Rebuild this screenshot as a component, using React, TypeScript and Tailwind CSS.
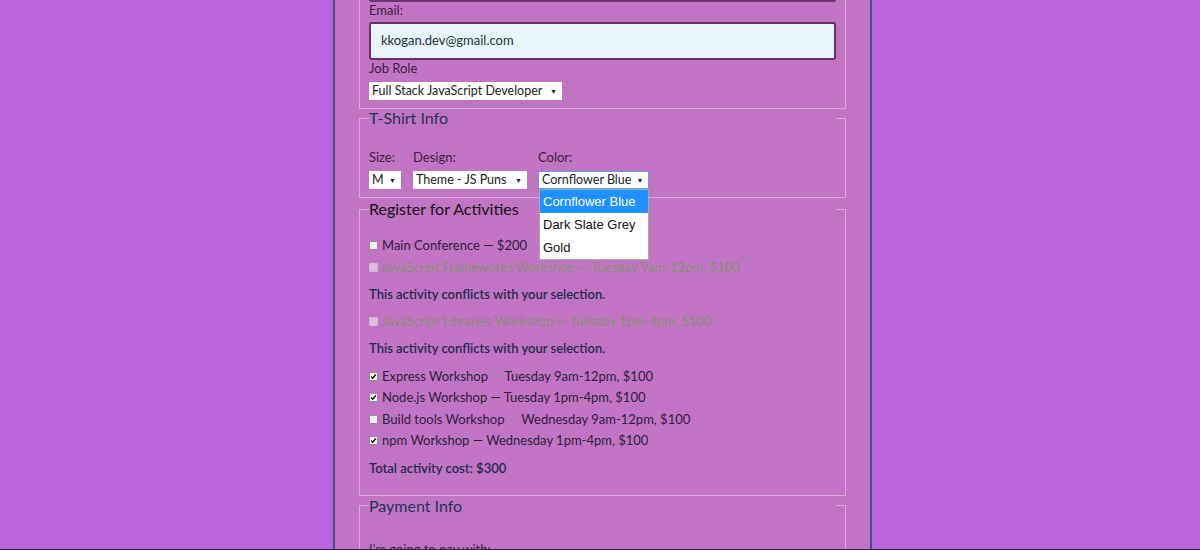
import React from "react";

type Activity = {
  name: string;
  detail: string;
  lightDash: boolean;
  checked: boolean;
  disabled: boolean;
  conflict?: boolean;
};

const activities: Activity[] = [
  { name: "Main Conference", detail: "$200", lightDash: false, checked: false, disabled: false },
  { name: "JavaScript Frameworks Workshop", detail: "Tuesday 9am-12pm, $100", lightDash: false, checked: false, disabled: true, conflict: true },
  { name: "JavaScript Libraries Workshop", detail: "Tuesday 1pm-4pm, $100", lightDash: false, checked: false, disabled: true, conflict: true },
  { name: "Express Workshop", detail: "Tuesday 9am-12pm, $100", lightDash: true, checked: true, disabled: false },
  { name: "Node.js Workshop", detail: "Tuesday 1pm-4pm, $100", lightDash: false, checked: true, disabled: false },
  { name: "Build tools Workshop", detail: "Wednesday 9am-12pm, $100", lightDash: true, checked: false, disabled: false },
  { name: "npm Workshop", detail: "Wednesday 1pm-4pm, $100", lightDash: false, checked: true, disabled: false },
];

function FakeSelect({ label, focused, className }: { label: string; focused?: boolean; className?: string }) {
  return (
    <div
      className={`flex h-[18px] items-center justify-between whitespace-nowrap bg-white pl-[3px] pr-[5px] text-[12.5px] text-[#222] ${
        focused ? "border border-[#5a9be6]" : ""
      } ${className ?? ""}`}
    >
      <span>{label}</span>
      <span className="ml-[5px] text-[7px]">▼</span>
    </div>
  );
}

function CheckBox({ checked, disabled }: { checked: boolean; disabled: boolean }) {
  return (
    <span
      className={`flex h-[9px] w-[9px] shrink-0 items-center justify-center rounded-[1px] border ${
        disabled ? "border-[#d6b6d6] bg-[#dbbcdb]" : "border-[#8e8e8e] bg-[#eeeeee]"
      }`}
    >
      {checked && (
        <svg viewBox="0 0 8 8" className="h-[7px] w-[7px]">
          <path d="M1.3 4.1 L3.1 5.9 L6.7 1.7" stroke="#1c1c1c" strokeWidth="1.6" fill="none" />
        </svg>
      )}
    </span>
  );
}

function Legend({ children, color }: { children: React.ReactNode; color: string }) {
  return (
    <legend className={`h-[22px] w-[467px] pb-[3px] text-[16px] leading-[22px] ${color}`}>{children}</legend>
  );
}

export default function App() {
  return (
    <div className="flex h-[550px] w-full flex-col overflow-hidden bg-[#b966dc] font-['Lato',sans-serif]">
      <div className="h-[549px] overflow-hidden">
        <div className="ml-[333px] h-full w-[539px] border-x-2 border-[#474f86] bg-[#c274c4] px-[24px]">
          {/* Basic info (scrolled) */}
          <fieldset className="border border-t-0 border-[#dba7db] px-[9px] pb-[8px]">
            <div className="h-[2px] rounded-b-[2px] bg-[#6c3a72]" />
            <div className="h-[16px] text-[13px] leading-[16px] text-[#3d1f3f]">Email:</div>
            <div className="mt-[4px] flex h-[38px] items-center rounded-[3px] border-2 border-[#6d2c70] bg-[#e8f5fb] pl-[10px] text-[13px] text-[#263040]">
              kkogan.dev@gmail.com
            </div>
            <div className="h-[16px] text-[13px] leading-[16px] text-[#3d1f3f]">Job Role</div>
            <FakeSelect label="Full Stack JavaScript Developer" className="mt-[6px] w-[193px]" />
          </fieldset>

          {/* T-Shirt */}
          <fieldset className="-mt-[2px] border border-[#dba7db] px-[9px] pb-[8px]">
            <Legend color="text-[#1f3657]">T-Shirt Info</Legend>
            <div className="flex pt-[20px] text-[13px] text-[#3d1f3f]">
              <div className="w-[44px]">
                <div className="h-[16px] leading-[16px]">Size:</div>
                <FakeSelect label="M" className="mt-[6px] w-[32px]" />
              </div>
              <div className="w-[125px]">
                <div className="h-[16px] leading-[16px]">Design:</div>
                <FakeSelect label="Theme - JS Puns" className="mt-[6px] w-[114px]" />
              </div>
              <div>
                <div className="h-[16px] leading-[16px]">Color:</div>
                <div className="relative mt-[6px]">
                  <FakeSelect label="Cornflower Blue" focused className="w-[111px]" />
                  <div className="absolute left-[1px] top-full z-10 w-[110px] border border-[#a7a7a7] bg-white font-['Liberation_Sans',sans-serif] text-[13px] text-[#111]">
                    <div className="flex h-[23px] items-center bg-[#1e90ff] pl-[3px] text-white">Cornflower Blue</div>
                    <div className="flex h-[23px] items-center pl-[3px]">Dark Slate Grey</div>
                    <div className="flex h-[23px] items-center pl-[3px]">Gold</div>
                  </div>
                </div>
              </div>
            </div>
          </fieldset>

          {/* Activities */}
          <fieldset className="border border-[#dba7db] px-[9px] pb-[15px]">
            <Legend color="text-[#121212]">Register for Activities</Legend>
            <div className="pt-[15px] text-[13px]">
              {activities.map((a) => (
                <React.Fragment key={a.name}>
                  <div
                    className={`flex h-[21.5px] items-center gap-[4px] ${
                      a.disabled ? "text-[#878c74]" : "text-[#2d2140]"
                    }`}
                  >
                    <CheckBox checked={a.checked} disabled={a.disabled} />
                    <span>
                      {a.name} <span className={a.lightDash ? "text-[#9a84a6]" : ""}>—</span> {a.detail}
                    </span>
                  </div>
                  {a.conflict && (
                    <div className="my-[5.5px] flex h-[22px] items-center font-semibold text-[#1f2c4d]">
                      This activity conflicts with your selection.
                    </div>
                  )}
                </React.Fragment>
              ))}
              <div className="mt-[6px] flex h-[22px] items-center font-semibold text-[#1f2c4d]">
                Total activity cost: $300
              </div>
            </div>
          </fieldset>

          {/* Payment */}
          <fieldset className="-mt-[1px] border border-[#dba7db] px-[9px] pb-[16px]">
            <Legend color="text-[#1f3657]">Payment Info</Legend>
            <div className="pt-[24px] text-[13px] leading-[16px] text-[#3d1f3f]">I'm going to pay with:</div>
          </fieldset>
        </div>
      </div>
      <div className="h-px w-full bg-[#3a2448]" />
    </div>
  );
}
